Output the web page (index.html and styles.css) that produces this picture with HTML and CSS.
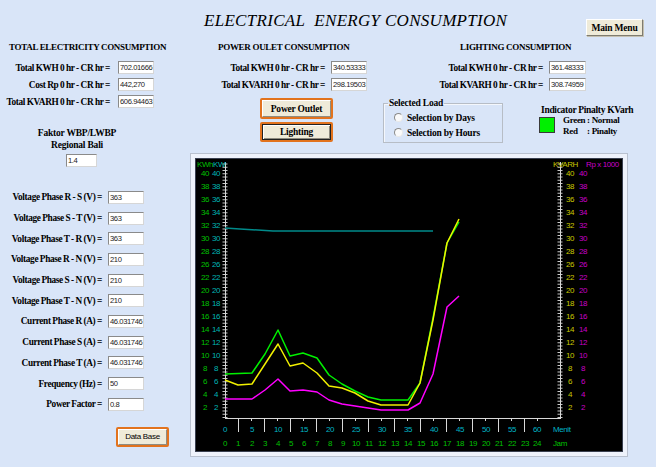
FILE: index.html
```html
<!DOCTYPE html>
<html>
<head>
<meta charset="utf-8">
<title>Electrical Energy Consumption</title>
<link rel="stylesheet" href="styles.css">
</head>
<body>
<div class="page">
  <aside class="left">
    <h2 class="sec-title">TOTAL ELECTRICITY CONSUMPTION</h2>
    <div class="form form-total">
      <span class="lbl">Total KWH 0 hr - CR hr =</span><span class="box">702.01666</span>
      <span class="lbl">Cost Rp 0 hr - CR hr =</span><span class="box">442,270</span>
      <span class="lbl">Total KVARH 0 hr - CR hr =</span><span class="box">606.94463</span>
    </div>
    <div class="faktor">Faktor WBP/LWBP<br>Regional Bali</div>
    <span class="box faktor-box">1.4</span>
    <div class="form form-phase">
      <span class="lbl">Voltage Phase R - S (V) =</span><span class="box">363</span>
      <span class="lbl">Voltage Phase S - T (V) =</span><span class="box">363</span>
      <span class="lbl">Voltage Phase T - R (V) =</span><span class="box">363</span>
      <span class="lbl">Voltage Phase R - N (V) =</span><span class="box">210</span>
      <span class="lbl">Voltage Phase S - N (V) =</span><span class="box">210</span>
      <span class="lbl">Voltage Phase T - N (V) =</span><span class="box">210</span>
      <span class="lbl">Current Phase R (A) =</span><span class="box">46.031746</span>
      <span class="lbl">Current Phase S (A) =</span><span class="box">46.031746</span>
      <span class="lbl">Current Phase T (A) =</span><span class="box">46.031746</span>
      <span class="lbl">Frequency (Hz) =</span><span class="box">50</span>
      <span class="lbl">Power Factor =</span><span class="box">0.8</span>
    </div>
    <div class="oframe db-frame"><button class="btn btn-sans">Data Base</button></div>
  </aside>

  <main class="right">
    <header class="head">
      <h1 class="title">ELECTRICAL&nbsp; ENERGY CONSUMPTION</h1>
      <button class="btn menu">Main Menu</button>
    </header>

    <div class="consump">
      <section class="po">
        <h2 class="sec-title">POWER OULET CONSUMPTION</h2>
        <div class="form form-po">
          <span class="lbl">Total KWH 0 hr - CR hr =</span><span class="box">340.53333</span>
          <span class="lbl">Total KVARH 0 hr - CR hr =</span><span class="box">298.19503</span>
        </div>
      </section>
      <section class="li">
        <h2 class="sec-title">LIGHTING CONSUMPTION</h2>
        <div class="form form-li">
          <span class="lbl">Total KWH 0 hr - CR hr =</span><span class="box">361.48333</span>
          <span class="lbl">Total KVARH 0 hr - CR hr =</span><span class="box">308.74959</span>
        </div>
      </section>
    </div>

    <div class="controls">
      <div class="btns">
        <div class="oframe of-po"><button class="btn">Power Outlet</button></div>
        <div class="oframe of-li"><button class="btn pressed">Lighting</button></div>
      </div>
      <fieldset class="group">
        <legend>Selected Load</legend>
        <div class="radio-row"><span class="radio"></span>Selection by Days</div>
        <div class="radio-row"><span class="radio"></span>Selection by Hours</div>
      </fieldset>
      <div class="indicator">
        <div class="ind-title">Indicator Pinalty KVarh</div>
        <div class="ind-row">
          <span class="lamp"></span>
          <div class="ind-legend">
            <span>Green</span><span>: Normal</span>
            <span>Red</span><span>: Pinalty</span>
          </div>
        </div>
      </div>
    </div>

    <div class="chart-frame">
      <div class="chart">
        <svg width="428" height="294" viewBox="195 158 428 294" xmlns="http://www.w3.org/2000/svg">
          <g class="axes">
            <line x1="225" y1="418" x2="225" y2="163" stroke="#c8c8c8" stroke-width="5" stroke-dasharray="1 2.25"/>
            <line x1="560" y1="418" x2="560" y2="163" stroke="#c8c8c8" stroke-width="5" stroke-dasharray="1 2.25"/>
            <line x1="225.5" y1="162" x2="225.5" y2="418.5" stroke="#d8d8d8" stroke-width="1"/>
            <line x1="560.5" y1="162" x2="560.5" y2="418.5" stroke="#d8d8d8" stroke-width="1"/>
            <line x1="225" y1="418.5" x2="561" y2="418.5" stroke="#d8d8d8" stroke-width="1"/>
            <path d="M238.5 418v14M264.5 418v14M290.5 418v14M316.5 418v14M342.5 418v14M368.5 418v14M394.5 418v14M420.5 418v14M446.5 418v14M472.5 418v14M498.5 418v14M524.5 418v14" stroke="#d8d8d8" stroke-width="1"/>
            <path d="M251.5 418v3M277.5 418v3M303.5 418v3M329.5 418v3M355.5 418v3M381.5 418v3M407.5 418v3M433.5 418v3M459.5 418v3M485.5 418v3M511.5 418v3M537.5 418v3" stroke="#d8d8d8" stroke-width="1"/>
          </g>
          <g fill="none" stroke-width="1.5" stroke-linejoin="round">
            <polyline stroke="#008a8a" points="225,228 240,229 273,231 433,231"/>
            <polyline stroke="#ff00ff" points="225,399 252,399 265,390 278,379 290,391 303,390 317,392 329,400 342,404 355,406 368,408 381,410 408,410 420,403 433,374 447,307 459,296"/>
            <polyline stroke="#00f000" points="225,374 252,373 265,354 278,330 290,356 303,353 317,358 329,375 342,384 355,391 368,397 381,400 408,400 420,383 433,318 447,243 459,222"/>
            <polyline stroke="#f0f000" points="225,380 238,385 252,384 265,364 278,344 290,366 303,363 317,373 329,386 342,388 355,393 368,401 381,405 408,405 420,383 433,320 447,243 459,219"/>
          </g>
          <g class="lab">
            <text x="197" y="167" fill="#00c000" text-anchor="start">KWh</text>
            <text x="213" y="167" fill="#00b4b4" text-anchor="start">KW</text>
            <text x="553" y="167" fill="#c8c800" text-anchor="start">KVARH</text>
            <text x="586" y="167" fill="#c800c8" text-anchor="start">Rp x 1000</text>
          </g>
          <g class="lab" fill="#00c000" text-anchor="middle">
            <text x="205" y="176">40</text><text x="205" y="189">38</text><text x="205" y="202">36</text><text x="205" y="215">34</text><text x="205" y="228">32</text><text x="205" y="241">30</text><text x="205" y="254">28</text><text x="205" y="267">26</text><text x="205" y="280">22</text><text x="205" y="293">20</text><text x="205" y="306">18</text><text x="205" y="319">16</text><text x="205" y="332">14</text><text x="205" y="345">12</text><text x="205" y="358">10</text><text x="205" y="371">8</text><text x="205" y="384">6</text><text x="205" y="397">4</text><text x="205" y="410">2</text>
          </g>
          <g class="lab" fill="#00b4b4" text-anchor="middle">
            <text x="216" y="176">40</text><text x="216" y="189">38</text><text x="216" y="202">36</text><text x="216" y="215">34</text><text x="216" y="228">32</text><text x="216" y="241">30</text><text x="216" y="254">28</text><text x="216" y="267">26</text><text x="216" y="280">22</text><text x="216" y="293">20</text><text x="216" y="306">18</text><text x="216" y="319">16</text><text x="216" y="332">14</text><text x="216" y="345">12</text><text x="216" y="358">10</text><text x="216" y="371">8</text><text x="216" y="384">6</text><text x="216" y="397">4</text><text x="216" y="410">2</text>
          </g>
          <g class="lab" fill="#c8c800" text-anchor="middle">
            <text x="570" y="176">40</text><text x="570" y="189">38</text><text x="570" y="202">36</text><text x="570" y="215">34</text><text x="570" y="228">32</text><text x="570" y="241">30</text><text x="570" y="254">28</text><text x="570" y="267">26</text><text x="570" y="280">22</text><text x="570" y="293">20</text><text x="570" y="306">18</text><text x="570" y="319">16</text><text x="570" y="332">14</text><text x="570" y="345">12</text><text x="570" y="358">10</text><text x="570" y="371">8</text><text x="570" y="384">6</text><text x="570" y="397">4</text><text x="570" y="410">2</text>
          </g>
          <g class="lab" fill="#c800c8" text-anchor="middle">
            <text x="583" y="176">40</text><text x="583" y="189">38</text><text x="583" y="202">36</text><text x="583" y="215">34</text><text x="583" y="228">32</text><text x="583" y="241">30</text><text x="583" y="254">28</text><text x="583" y="267">26</text><text x="583" y="280">22</text><text x="583" y="293">20</text><text x="583" y="306">18</text><text x="583" y="319">16</text><text x="583" y="332">14</text><text x="583" y="345">12</text><text x="583" y="358">10</text><text x="583" y="371">8</text><text x="583" y="384">6</text><text x="583" y="397">4</text><text x="583" y="410">2</text>
          </g>
          <g class="lab" fill="#00b4c4" text-anchor="middle">
            <text x="225" y="432">0</text><text x="252" y="432">5</text><text x="278" y="432">10</text><text x="304" y="432">15</text><text x="330" y="432">20</text><text x="356" y="432">25</text><text x="382" y="432">30</text><text x="408" y="432">35</text><text x="434" y="432">40</text><text x="460" y="432">45</text><text x="486" y="432">50</text><text x="512" y="432">55</text><text x="537" y="432">60</text>
            <text x="553" y="432" text-anchor="start">Menit</text>
          </g>
          <g class="lab" fill="#00c000" text-anchor="middle">
            <text x="225" y="446">0</text><text x="238" y="446">1</text><text x="252" y="446">2</text><text x="265" y="446">3</text><text x="278" y="446">4</text><text x="291" y="446">5</text><text x="304" y="446">6</text><text x="317" y="446">7</text><text x="330" y="446">8</text><text x="343" y="446">9</text><text x="356" y="446">10</text><text x="369" y="446">11</text><text x="382" y="446">12</text><text x="395" y="446">13</text><text x="408" y="446">14</text><text x="421" y="446">15</text><text x="434" y="446">16</text><text x="447" y="446">17</text><text x="460" y="446">18</text><text x="473" y="446">19</text><text x="486" y="446">20</text><text x="499" y="446">21</text><text x="512" y="446">22</text><text x="525" y="446">23</text><text x="537" y="446">24</text>
            <text x="553" y="446" text-anchor="start">Jam</text>
          </g>
        </svg>
      </div>
    </div>
  </main>
</div>
</body>
</html>
```

FILE: styles.css
```css
* {
  box-sizing: border-box;
  margin: 0;
  padding: 0;
}

html, body {
  margin: 0;
  background: #d9e5f8;
}

body {
  font-family: "Liberation Serif", "Times New Roman", serif;
  color: #000;
}

.page {
  width: 656px;
  height: 467px;
  display: grid;
  grid-template-columns: 190px 466px;
  overflow: hidden;
}

/* ---------- shared ---------- */
.sec-title {
  font-size: 9px;
  font-weight: bold;
  line-height: 12px;
  letter-spacing: -0.3px;
  white-space: nowrap;
}

.form {
  display: grid;
  grid-template-columns: var(--lw) var(--bw, 36px);
  column-gap: var(--gap, 6px);
  grid-auto-rows: 17px;
  align-items: center;
  margin-top: 6px;
}

.lbl {
  text-align: right;
  font-size: 9.3px;
  font-weight: bold;
  letter-spacing: -0.35px;
  word-spacing: -0.3px;
  white-space: nowrap;
  line-height: 12px;
}

.box {
  display: block;
  height: 13px;
  background: #fff;
  border: 1px solid;
  border-color: #8a8a8a #d6d6d6 #d6d6d6 #8a8a8a;
  font-family: "Liberation Sans", Arial, sans-serif;
  font-size: 7.6px;
  letter-spacing: -0.4px;
  line-height: 11px;
  padding-left: 1px;
  color: #222;
  overflow: hidden;
  white-space: nowrap;
}

.btn {
  display: block;
  width: 100%;
  height: 100%;
  background: #efebd9;
  border: 1px solid;
  border-color: #ffffff #8f8c80 #8f8c80 #ffffff;
  font-family: "Liberation Serif", "Times New Roman", serif;
  font-size: 9.5px;
  font-weight: bold;
  letter-spacing: -0.2px;
  color: #000;
  cursor: default;
}

.btn.pressed {
  border: 1px solid #222;
  box-shadow: inset 1px 1px 0 #fff, inset -1px -1px 0 #8f8c80;
}

.btn-sans {
  font-family: "Liberation Sans", Arial, sans-serif;
  font-weight: normal;
  font-size: 8px;
  letter-spacing: -0.3px;
}

.oframe {
  border: 2px solid #e2731e;
  border-radius: 2px;
  background: #efebd9;
}

/* ---------- left column ---------- */
.left {
  padding-top: 41px;
}

.left .sec-title {
  padding-left: 9px;
}

.form-total {
  --lw: 110px;
  --gap: 8px;
}

.faktor {
  width: 154px;
  margin-top: 17px;
  text-align: center;
  font-size: 9.5px;
  font-weight: bold;
  line-height: 12px;
  letter-spacing: -0.2px;
}

.faktor-box {
  width: 31px;
  margin-left: 66px;
  margin-top: 3px;
}

.form-phase {
  --lw: 102px;
  --gap: 6px;
  grid-auto-rows: 20.7px;
  margin-top: 20px;
}

.db-frame {
  width: 53px;
  height: 20px;
  margin-left: 116px;
  margin-top: 12px;
}

/* ---------- right column ---------- */
.head {
  display: flex;
  align-items: flex-start;
  height: 41px;
}

.title {
  margin-left: 14px;
  margin-top: 11px;
  font-size: 17px;
  font-style: italic;
  font-weight: normal;
  line-height: 20px;
  letter-spacing: 0.3px;
  white-space: nowrap;
}

.menu {
  width: 57px;
  height: 17px;
  margin-left: auto;
  margin-right: 13px;
  margin-top: 19px;
  border-color: #ffffff #7e7b70 #7e7b70 #ffffff;
  box-shadow: 1px 1px 0 #c4c0b0;
}

.consump {
  display: grid;
  grid-template-columns: 230px 236px;
}

.po .sec-title {
  padding-left: 28px;
}

.form-po {
  --lw: 135px;
  --gap: 6px;
}

.li .sec-title {
  padding-left: 40px;
}

.form-li {
  --lw: 123px;
  --gap: 6px;
  --bw: 37px;
}

/* controls */
.controls {
  display: flex;
  align-items: flex-start;
  height: 60px;
  padding-top: 5px;
}

.btns {
  display: flex;
  flex-direction: column;
  gap: 3px;
  width: 73px;
  margin-left: 70px;
}

.of-po {
  height: 21px;
}

.of-li {
  height: 20px;
}

.group {
  width: 120px;
  height: 45px;
  margin-left: 50px;
  border: 1px solid #b7bdc6;
  box-shadow: 1px 1px 0 #f4f7fc inset;
  padding: 0 0 0 10px;
}

.group legend {
  margin-left: -6px;
  padding: 0 1px;
  font-size: 9.5px;
  font-weight: bold;
  line-height: 11px;
  letter-spacing: -0.2px;
}

.radio-row {
  display: flex;
  align-items: center;
  gap: 4px;
  height: 15px;
  font-size: 9.5px;
  font-weight: bold;
  letter-spacing: -0.2px;
  white-space: nowrap;
}

.group .radio-row:first-of-type {
  margin-top: 1px;
}

.radio {
  width: 9px;
  height: 9px;
  border-radius: 50%;
  background: #fafafa;
  border: 1px solid;
  border-color: #8a8a8a #e8e8e8 #e8e8e8 #8a8a8a;
}

.indicator {
  margin-left: 36px;
  margin-top: 8px;
}

.ind-title {
  padding-left: 2px;
  font-size: 9.5px;
  font-weight: bold;
  line-height: 9px;
  letter-spacing: -0.3px;
  white-space: nowrap;
}

.ind-row {
  display: flex;
  align-items: flex-start;
  gap: 8px;
}

.lamp {
  width: 16px;
  height: 16px;
  margin-top: 2px;
  background: #00f000;
  border: 1px solid #3a3a3a;
}

.ind-legend {
  display: grid;
  grid-template-columns: 24px auto;
  grid-auto-rows: 11px;
  font-size: 9px;
  font-weight: bold;
  line-height: 11px;
  letter-spacing: -0.3px;
  white-space: nowrap;
}

/* chart */
.chart-frame {
  width: 438px;
  height: 304px;
  border: 1px solid #b9c1cf;
  background: #eef2fb;
  padding: 4px;
}

.chart {
  width: 428px;
  height: 294px;
  background: #000;
  box-shadow: inset 0 0 0 1px #3a4050;
}

.chart svg {
  display: block;
}

.lab text,
text {
  font-family: "Liberation Sans", Arial, sans-serif;
  font-size: 8px;
  letter-spacing: -0.4px;
}
```
